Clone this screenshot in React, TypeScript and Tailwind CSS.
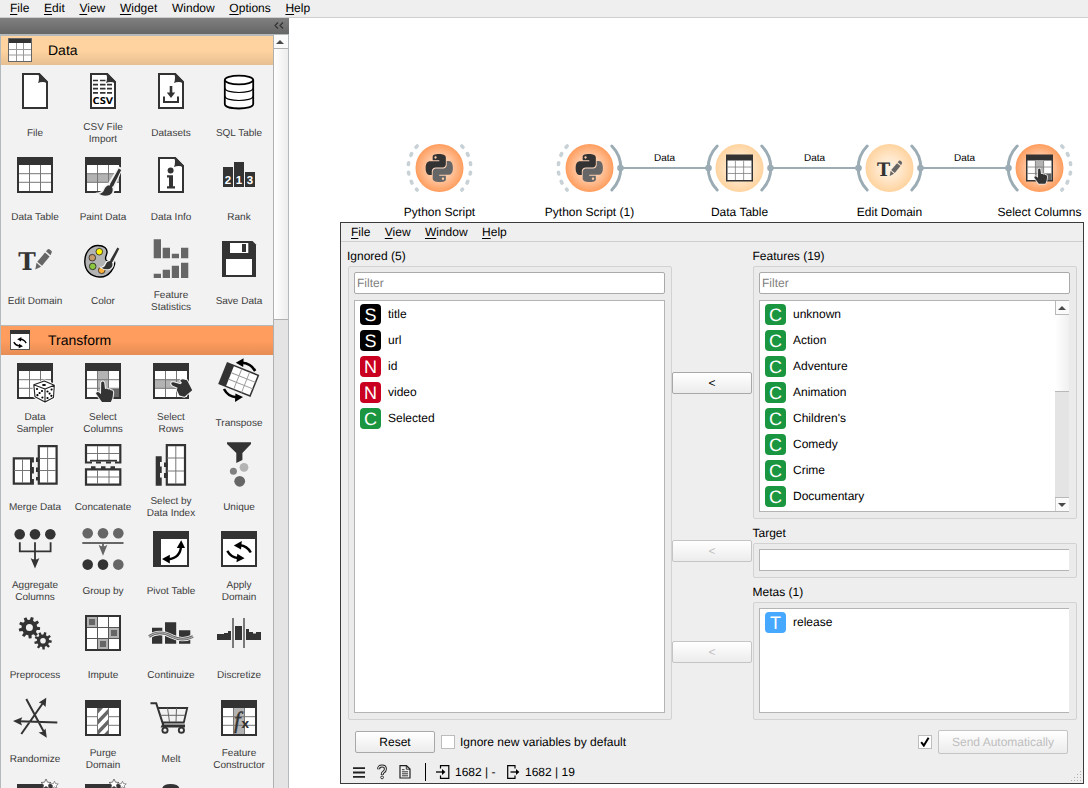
import React from "react";

const D = "#333333";
const G = "#666666";

/* ---------- drawing helpers ---------- */

function Table({ mid, children }: { mid?: React.ReactNode; children?: React.ReactNode }) {
  return (
    <g>
      <rect x="6" y="6" width="36" height="36" fill={D} />
      <rect x="8" y="14" width="32" height="26" fill="#fff" />
      {mid}
      <path d="M18.5 14V40M29.5 14V40M8 22.7H40M8 31.3H40" stroke="#777" strokeWidth="1" fill="none" />
      {children}
    </g>
  );
}

function Doc({ children }: { children?: React.ReactNode }) {
  return (
    <g>
      <path d="M12 7H28L36 15.5V41H12Z" fill="#fff" stroke={D} strokeWidth="2" />
      <path d="M27 6H28.5L37 14.5V16.5Q32 14 27 16Q29 11 27 6Z" fill={D} />
      {children}
    </g>
  );
}

function Brush({ x = 0, y = 0 }: { x?: number; y?: number }) {
  return (
    <g transform={`translate(${x} ${y})`}>
      <path d="M42 18L40 17L29.5 34Q26 35 25 38.5Q24 42 20 42.5Q25 46 30.5 44Q35 42 34 37.5Z" fill={D} stroke="#f2f2f2" strokeWidth="2.6" />
      <path d="M42.2 19L39.8 17.4L31 33.2L34 35.4Z" fill={D} />
      <path d="M30 34.3Q26.5 35 25.3 38.5Q24 42.5 20 42.8Q25 46 30.5 44Q34.5 42 33.6 37.3Z" fill={D} />
    </g>
  );
}

const handUp =
  "M22.2 25.5Q23.7 23.5 25.2 25.5L26 32Q28.2 31 29 32.6Q31 31.8 31.8 33.4Q34 33 34.2 35.5L33.5 41L31.8 45H23L17 36.5Q18.3 34 20.5 35.8L22 37.2Z";

function HandUp() {
  return <path d={handUp} fill={D} stroke="#f2f2f2" strokeWidth="2" paintOrder="stroke" strokeLinejoin="round" />;
}

function Pencil() {
  return (
    <g fill={G}>
      <path d="M24.3 34.5L25.5 27.8L30 31.8Z" />
      <path d="M26.3 26.8L34 17.6L38.6 21.4L31 30.8Z" />
      <path d="M35 16.3L36.6 14.4Q37.6 13.4 38.8 14.4L40.5 16Q41.3 17 40.5 18L39.4 20.2Z" />
    </g>
  );
}

function EditIcon() {
  return (
    <g>
      <text x="7.3" y="35" fontFamily="DejaVu Serif, serif" fontWeight="700" fontSize="24.5" textLength="17.5" lengthAdjust="spacingAndGlyphs" fill={D}>T</text>
      <Pencil />
    </g>
  );
}

function ColumnsIcon() {
  return (
    <Table mid={<><rect x="18" y="14" width="12" height="26" fill="#b3b3b3" /><rect x="30" y="32" width="10" height="8" fill={G} /></>}>
      <HandUp />
    </Table>
  );
}

function gear(cx: number, cy: number, ro: number, ri: number, teeth: number) {
  const pts: string[] = [];
  for (let i = 0; i < teeth; i++) {
    const a = (i * 2 * Math.PI) / teeth + 0.1;
    const s = Math.PI / teeth;
    [[-0.62, ri], [-0.38, ro], [0.38, ro], [0.62, ri]].forEach(([k, r]) => {
      pts.push(`${(cx + r * Math.cos(a + k * s)).toFixed(2)} ${(cy + r * Math.sin(a + k * s)).toFixed(2)}`);
    });
  }
  return `M${pts.join("L")}Z`;
}

function ring(cx: number, cy: number, r: number) {
  return `M${cx - r} ${cy}a${r} ${r} 0 1 0 ${2 * r} 0a${r} ${r} 0 1 0 ${-2 * r} 0Z`;
}

function SwapArrows() {
  return (
    <g>
      <path d="M35.8 27.5Q32 20.8 25 20.3" fill="none" stroke="#000" strokeWidth="2.4" />
      <path d="M18.8 20.4L26.8 16L26 24.6Z" />
      <path d="M12.3 25.8Q16 32.3 23 33" fill="none" stroke="#000" strokeWidth="2.4" />
      <path d="M29.6 33.3L21.5 37.2L22.3 28.8Z" />
    </g>
  );
}

function ApplyIcon() {
  return (
    <g>
      <rect x="6" y="6" width="36" height="36" fill={D} />
      <rect x="8" y="14" width="32" height="26" fill="#fff" />
      <SwapArrows />
    </g>
  );
}

function Star({ x, y, s }: { x: number; y: number; s: number }) {
  return (
    <path
      transform={`translate(${x} ${y}) scale(${s})`}
      d="M0 -5L1.5 -1.8L5 -1.5L2.4 0.9L3.2 4.4L0 2.5L-3.2 4.4L-2.4 0.9L-5 -1.5L-1.5 -1.8Z"
      fill="#fff"
      stroke="#555"
      strokeWidth="0.8"
    />
  );
}

function StarTable() {
  return (
    <g transform="translate(0 1)">
      <Table />
      <Star x={35} y={6} s={1} />
      <Star x={43.5} y={7} s={0.75} />
    </g>
  );
}

/* ---------- widget icons ---------- */

const icons: Record<string, React.ReactNode> = {
  file: <Doc />,
  csv: (
    <Doc>
      {[13.5, 17.6, 21.7, 25.8].map((y) => (
        <path key={y} d={`M14 ${y}H19M21 ${y}H26.5M28 ${y}H33`} stroke={D} strokeWidth="1.7" />
      ))}
      <text x="13.6" y="37.2" fontFamily="Open Sans, sans-serif" fontWeight="700" fontSize="9.6" textLength="20.5" lengthAdjust="spacingAndGlyphs" fill="#000">CSV</text>
    </Doc>
  ),
  datasets: (
    <Doc>
      <path d="M22.7 19H25.3V25.5H28.2L24 31L19.8 25.5H22.7Z" fill={D} />
      <path d="M17 29.5V35H31V29.5" fill="none" stroke={D} strokeWidth="2" />
    </Doc>
  ),
  sql: (
    <g fill="#fff" stroke="#000" strokeWidth="1.8">
      <path d="M9.8 13V37C9.8 43 38.2 43 38.2 37V13" />
      <path d="M9.8 21C9.8 27 38.2 27 38.2 21M9.8 29C9.8 35 38.2 35 38.2 29" fill="none" strokeWidth="1.1" />
      <ellipse cx="24" cy="13" rx="14.2" ry="4.3" />
    </g>
  ),
  table: <Table />,
  paint: (
    <Table mid={<rect x="8" y="23" width="32" height="8.5" fill="#b3b3b3" />}>
      <Brush />
    </Table>
  ),
  info: (
    <Doc>
      <circle cx="23.6" cy="19.4" r="3" fill={D} />
      <path d="M20 24.3H26V35.2H28V37.5H20V35.2H22V26.6H20Z" fill={D} />
    </Doc>
  ),
  rank: (
    <g>
      <path d="M8 16H18V36H8ZM19 11H29V36H19ZM30 21H40V36H30Z" fill={D} />
      <g fill="#fff" fontFamily="Liberation Sans, sans-serif" fontWeight="700" fontSize="11.5" textAnchor="middle">
        <text x="13" y="33.3">2</text>
        <text x="24" y="33.3">1</text>
        <text x="35" y="33.3">3</text>
      </g>
    </g>
  ),
  edit: <EditIcon />,
  color: (
    <g>
      <path
        d="M5.8 27C5.5 18 11 10.5 19 10.5C25 10.5 28.5 13.5 28 17.5C27.6 21 25.5 22 27 25C28.5 27.5 31 25.5 34 25.5C37 26 35.6 32 32 36.5C28.5 41 24.5 42.2 20.5 42C11.5 41.5 6 35.5 5.8 27Z"
        fill="#b3b3b3"
        stroke="#000"
        strokeWidth="1.4"
      />
      <g stroke="#222" strokeWidth="0.8">
        <circle cx="20.3" cy="16.7" r="3.3" fill="#fff200" />
        <circle cx="13.3" cy="22.7" r="3.3" fill="#c69c6d" />
        <circle cx="13.7" cy="31.4" r="3.3" fill="#8cc63f" />
        <circle cx="22.7" cy="35.3" r="3.3" fill="#fbb03b" />
      </g>
      <g transform="translate(6.5 -1.5) scale(0.8)">
        <Brush />
      </g>
    </g>
  ),
  stats: (
    <path
      fill={G}
      d="M6.7 4.3H14V23.3H6.7ZM15.7 12.7H23V23.3H15.7ZM24.8 18.7H32V23.3H24.8ZM34 12.7H41.3V23.3H34ZM6.7 38.7H14V43H6.7ZM15.7 34.7H23V43H15.7ZM24.8 30.7H32V43H24.8ZM34 27.7H41.3V43H34Z"
    />
  ),
  save: (
    <g>
      <path d="M7 6H37.5L41 9.5V42H7Z" fill={D} />
      <rect x="15" y="8" width="18.3" height="10" fill="#fff" />
      <rect x="27" y="9" width="4" height="8" fill={D} />
      <rect x="11" y="24" width="26" height="16" fill="#fff" />
    </g>
  ),
  sampler: (
    <Table>
      <path d="M33.3 24L43.3 28.3L42.5 40.5L34 45L24 39.7L22.8 27.8Z" fill="#fff" stroke="#fff" strokeWidth="3" />
      <path d="M33.3 24L43.3 28.3L42.5 40.5L34 45L24 39.7L22.8 27.8ZM22.8 27.8L34 32L43.3 28.3M34 32V45" fill="#fff" stroke="#222" strokeWidth="1.1" strokeLinejoin="round" />
      <g fill="#000">
        <ellipse cx="33" cy="28" rx="2" ry="1.1" />
        <circle cx="26" cy="32" r="1.1" />
        <circle cx="31" cy="34" r="1.1" />
        <circle cx="28.6" cy="36" r="1.1" />
        <circle cx="26.4" cy="38.2" r="1.1" />
        <circle cx="31.4" cy="40.5" r="1.1" />
        <circle cx="36.5" cy="34.5" r="1.1" />
        <circle cx="40.6" cy="32.5" r="1.1" />
        <circle cx="38.6" cy="36.6" r="1.1" />
        <circle cx="36.5" cy="41" r="1.1" />
        <circle cx="40.4" cy="38.8" r="1.1" />
      </g>
    </Table>
  ),
  columns: <ColumnsIcon />,
  rows: (
    <Table mid={<rect x="8" y="22.5" width="32" height="9" fill="#b3b3b3" />}>
      <path
        d="M24.2 26.8Q24 24.8 26.5 25.3L33.5 27.2L35 25.8L33.2 23.8Q34 21.8 37 22.4L40 23.2L42.5 28L45.2 33.2L37.5 39.8L32.5 38.6L31 35.5L29.8 33L30.5 30.8L25.4 28.4Z"
        fill={D}
        stroke="#f2f2f2"
        strokeWidth="2"
        paintOrder="stroke"
        strokeLinejoin="round"
      />
    </Table>
  ),
  transpose: (
    <g>
      <g transform="translate(12 5) rotate(21.8)">
        <rect x="0" y="0" width="34.8" height="23.8" fill={D} />
        <rect x="8" y="1.5" width="25.3" height="20.8" fill="#fff" />
        <path d="M16.3 1V23M24.8 1V23M8 8.4H34M8 15.4H34" stroke="#999" strokeWidth="0.9" />
      </g>
      <path d="M40.2 14Q36 6.5 27.5 5.8" fill="none" stroke="#000" strokeWidth="2.6" />
      <path d="M20.8 5.8L28.6 1.2L28.2 10Z" />
      <path d="M9 32Q13 39.6 21 40.2" fill="none" stroke="#000" strokeWidth="2.6" />
      <path d="M28 40L20 45L20.4 36.4Z" />
    </g>
  ),
  merge: (
    <g>
      <path d="M2.8 17.4H21.8V42.6H2.8Z" fill="#fff" stroke={D} strokeWidth="2.2" />
      <path d="M11.5 18V42M3 29.5H20" stroke="#777" fill="none" />
      <path d="M19.5 21.5H24V26H19.5ZM19.5 32.5H24V38H19.5Z" fill="#f2f2f2" />
      <path d="M20 18V42" stroke={D} strokeWidth="2" fill="none" />
      <path d="M27.8 5.1H45.6V42.6H27.8Z" fill="#fff" stroke={D} strokeWidth="2.2" />
      <path d="M36.6 6V42M28 17.5H45M28 29.5H45" stroke="#777" fill="none" />
      <path d="M25 16.5H28.5V21H25ZM25 26.5H28.5V31H25ZM25 36H28.5V39.5H25Z" fill={D} />
    </g>
  ),
  concat: (
    <g>
      <path d="M7 4.1H41.3V21.5H7Z" fill="#fff" stroke={D} strokeWidth="2.2" />
      <path d="M18.5 5V20M30 5V20M8 12.5H40" stroke="#777" fill="none" />
      <path d="M13 19.5H17V24H13ZM22 19.5H27V24H22ZM32 19.5H36V24H32Z" fill="#f2f2f2" />
      <path d="M11 19.7H38" stroke={D} strokeWidth="1.8" />
      <path d="M7 28.3H41.3V43.6H7Z" fill="#fff" stroke={D} strokeWidth="2.2" />
      <path d="M18.5 29V43M30 29V43M8 36H40" stroke="#777" fill="none" />
      <path d="M12 25.3H16.5V29H12ZM22 25.3H26.5V29H22ZM31.5 25.3H36V29H31.5Z" fill={D} />
    </g>
  ),
  index: (
    <g>
      <path d="M8.7 15.3H14.7V21H13V25.5H14.7V32H13V36.5H14.7V44.8H8.7Z" fill={D} />
      <path d="M19.8 4.1H38V43.6H19.8Z" fill="#fff" stroke={D} strokeWidth="2.2" />
      <path d="M28.8 5V43M20 17H37M20 30H37" stroke="#777" fill="none" />
      <path d="M17 21.5H20.5V26H17ZM17 32H20.5V37H17Z" fill={D} />
    </g>
  ),
  unique: (
    <g>
      <path d="M12 1.3H36V3L27.4 12V19L21.3 22V12L12 3Z" fill={D} />
      <circle cx="29" cy="26.3" r="4.4" fill="#b3b3b3" />
      <circle cx="18.4" cy="30.3" r="3.5" fill="#808080" />
      <circle cx="24.7" cy="40.3" r="5.4" fill={G} />
    </g>
  ),
  aggregate: (
    <g fill={D}>
      <circle cx="8.7" cy="9.3" r="5.3" />
      <circle cx="24" cy="9.3" r="5.3" />
      <circle cx="39.3" cy="9.3" r="5.3" />
      <path d="M8.8 17.3V26.3H39.6V17.3M24 17.3V37" fill="none" stroke={D} strokeWidth="1.8" />
      <path d="M19.6 33Q24 36 28.4 33L24 43.6Z" />
    </g>
  ),
  group: (
    <g fill={G}>
      <circle cx="8.7" cy="8.3" r="5.3" />
      <circle cx="24" cy="8.3" r="5.3" />
      <circle cx="39.3" cy="8.3" r="5.3" />
      <path d="M3.3 18H44.5M24 18V24" stroke={G} strokeWidth="1.8" />
      <path d="M19.6 19.8Q24 23 28.4 19.8L24 30.8Z" />
      <circle cx="8.7" cy="39.6" r="5.3" fill={D} />
      <circle cx="24" cy="39.6" r="5.3" fill={D} />
      <circle cx="39.3" cy="39.6" r="5.3" />
    </g>
  ),
  pivot: (
    <g>
      <rect x="6" y="6" width="36" height="36" fill={D} />
      <rect x="14" y="14" width="26" height="26" fill="#fff" />
      <path d="M34 21Q33.5 33 21 34.3" fill="none" stroke="#000" strokeWidth="2.4" />
      <path d="M34.2 15.2L38 23H29.8ZM15 34L22.8 29.8V38.4Z" />
    </g>
  ),
  apply: <ApplyIcon />,
  preprocess: (
    <g fill={D} fillRule="evenodd">
      <path d={gear(18.4, 18.6, 10.8, 7.8, 9) + ring(18.4, 18.6, 3.5)} />
      <path d={gear(32, 31.8, 8.8, 6.2, 9) + ring(32, 31.8, 2.8)} />
    </g>
  ),
  impute: (
    <g>
      <rect x="7" y="7" width="34" height="34" fill="#fff" stroke={D} strokeWidth="2" />
      <path d="M8 8H18.5V18.5H8ZM29.5 18.5H40V29.5H29.5ZM18.5 29.5H29.5V40H18.5Z" fill="#b3b3b3" />
      <path d="M10 10H16V16H10ZM32 21H38V27H32ZM21 32H27V38H21Z" fill={G} />
      <path d="M18.5 8V40M29.5 8V40M8 18.5H40M8 29.5H40" stroke="#555" />
    </g>
  ),
  continuize: (
    <g>
      <path d="M5 18.7H15.3V34.8H5ZM18 13.3H29.2V34.8H18ZM32 21.3H43.3V34.8H32Z" fill={D} />
      <path d="M2 27.5C10 22 17 23 25 27.5C32 31 39 31 46 27.5" fill="none" stroke="#f2f2f2" strokeWidth="4.4" />
      <path d="M2 27.5C10 22 17 23 25 27.5C32 31 39 31 46 27.5" fill="none" stroke={G} strokeWidth="2.8" />
      <path d="M2 27.5C10 22 17 23 25 27.5C32 31 39 31 46 27.5" fill="none" stroke="#ddd" strokeWidth="0.7" />
    </g>
  ),
  discretize: (
    <g>
      <path d="M2 25H9V24H13V22H16V31H2ZM20 17H27V31H20ZM31 20H34V23H38V24.5H41V23H46V31H31Z" fill={D} />
      <path d="M18 9V39M29 9V39" stroke={G} strokeWidth="1.7" />
    </g>
  ),
  randomize: (
    <g>
      <path d="M10.3 41L33 8.5M15.3 6L33.5 40M46.3 29.4L8 28.2" stroke={D} strokeWidth="2" />
      <path d="M35.3 4.8L34.6 14L31.6 11L27.8 9.6ZM35.8 44.8L27.6 39.6L31.8 38.8L34.5 35.6ZM2 28L11.3 24.2L9.6 28.2L11 32.6Z" fill={D} />
    </g>
  ),
  purge: (
    <g transform="translate(0 1)">
      <rect x="6" y="6" width="36" height="36" fill={D} />
      <rect x="8" y="14" width="32" height="26" fill="#fff" />
      <path d="M8 22.7H18M8 31.3H18M30 22.7H40M30 31.3H40M18.5 14V40M29.5 14V40" stroke="#777" />
      <path d="M19 14H24L19 19.5ZM29 15V20L19 30.5V25.5ZM29 25.5V30.5L20 40H19V36ZM29 36V40H25.2Z" fill={G} />
    </g>
  ),
  melt: (
    <g fill="none" stroke={D}>
      <path d="M3.5 10.2H9.2L16.4 32.4H38" strokeWidth="2" />
      <path d="M11 15H40.2L36.8 29.5H15.8" strokeWidth="1.8" />
      <path d="M20.5 15L22.5 29M29.5 15L29 29M13.5 22.3H38" stroke={G} strokeWidth="1" />
      <path d="M16.5 30L15 33.5H38" strokeWidth="1.8" />
      <circle cx="18" cy="37.2" r="2.6" strokeWidth="1.9" />
      <circle cx="34.4" cy="37.2" r="2.6" strokeWidth="1.9" />
    </g>
  ),
  constructor_: (
    <g transform="translate(0 1)">
      <Table mid={<rect x="18" y="14" width="12" height="26" fill="#b3b3b3" />} />
      <text x="19" y="33.5" fontFamily="Liberation Serif, serif" fontStyle="italic" fontSize="23.5" fill={D} stroke={D} strokeWidth="0.4">f</text>
      <text x="26.6" y="33.8" fontFamily="Open Sans, sans-serif" fontWeight="700" fontSize="13" fill={D}>x</text>
    </g>
  ),
  starTable: <StarTable />,
  blob: (
    <path d="M15 13Q15 7 23.5 7Q32 7 32.5 12V24H15Z" fill={D} />
  ),
};

function Icon({ name, size = "size-12" }: { name: string; size?: string }) {
  return (
    <svg viewBox="0 0 48 48" className={`${size} shrink-0 overflow-visible`}>
      {icons[name]}
    </svg>
  );
}

const dataWidgets: [string, string][] = [
  ["file", "File"], ["csv", "CSV File\nImport"], ["datasets", "Datasets"], ["sql", "SQL Table"],
  ["table", "Data Table"], ["paint", "Paint Data"], ["info", "Data Info"], ["rank", "Rank"],
  ["edit", "Edit Domain"], ["color", "Color"], ["stats", "Feature\nStatistics"], ["save", "Save Data"],
];

const transformWidgets: [string, string][] = [
  ["sampler", "Data\nSampler"], ["columns", "Select\nColumns"], ["rows", "Select\nRows"], ["transpose", "Transpose"],
  ["merge", "Merge Data"], ["concat", "Concatenate"], ["index", "Select by\nData Index"], ["unique", "Unique"],
  ["aggregate", "Aggregate\nColumns"], ["group", "Group by"], ["pivot", "Pivot Table"], ["apply", "Apply\nDomain"],
  ["preprocess", "Preprocess"], ["impute", "Impute"], ["continuize", "Continuize"], ["discretize", "Discretize"],
  ["randomize", "Randomize"], ["purge", "Purge\nDomain"], ["melt", "Melt"], ["constructor_", "Feature\nConstructor"],
  ["starTable", ""], ["starTable", ""], ["blob", ""],
];

function WidgetGrid({ items }: { items: [string, string][] }) {
  return (
    <div className="grid grid-cols-[repeat(4,68px)] auto-rows-[84px] pt-[2px]">
      {items.map(([icon, label], i) => (
        <div key={i} className="flex flex-col items-center">
          <Icon name={icon} />
          <div className="flex h-9 items-center whitespace-pre pt-[2px] text-center text-[10px] leading-[12px] text-[#3c3c3c]">{label}</div>
        </div>
      ))}
    </div>
  );
}

function Menu({ items, className }: { items: string[]; className: string }) {
  return (
    <div className={`flex shrink-0 items-center border-b border-[#cfcfcf] bg-[#efefef] text-xs leading-[14px] text-black ${className}`}>
      {items.map((m) => (
        <span key={m}>
          {m.startsWith("_") ? (
            <>
              <span className="underline underline-offset-2">{m[1]}</span>
              {m.slice(2)}
            </>
          ) : (
            m
          )}
        </span>
      ))}
    </div>
  );
}

function Arrow({ down }: { down?: boolean }) {
  return (
    <svg viewBox="0 0 8 4" className="h-1 w-2">
      <path d={down ? "M0 0H8L4 4Z" : "M0 4H8L4 0Z"} fill="#4a4a4a" />
    </svg>
  );
}

function Sidebar() {
  return (
    <div className="flex w-[289px] shrink-0 flex-col">
      <div className="flex h-4 shrink-0 items-start justify-end bg-linear-to-b from-[#808080] to-[#666] pr-[5px] pt-1">
        <svg viewBox="0 0 10 7" className="h-[7px] w-[10px]">
          <path d="M4 0.5L1 3.5L4 6.5M9 0.5L6 3.5L9 6.5" fill="none" stroke="#333" strokeWidth="1.2" />
        </svg>
      </div>
      <div className="flex min-h-0 grow border-x border-t border-[#b4b9bb] bg-[#f2f2f2]">
        <div className="w-[272px] shrink-0 overflow-hidden">
          <div className="flex h-[30px] items-center border-t border-[#b4b9bb] bg-linear-to-b from-[#ffd39f] from-50% to-[#e6bf92] pb-px pl-[7px] text-sm text-black">
            <svg viewBox="0 0 24 24" className="size-6">
              <rect width="24" height="24" fill={D} />
              <rect x="1" y="5" width="22" height="18" fill="#fff" />
              <path d="M8.5 5V23M15.5 5V23M1 11.5H23M1 17H23" stroke="#999" />
              <rect x="0.5" y="0.5" width="23" height="23" fill="none" stroke="#666" />
            </svg>
            <span className="pl-4">Data</span>
          </div>
          <WidgetGrid items={dataWidgets} />
          <div className="mt-[6px] flex h-[30px] items-center border-t border-[#b4b9bb] bg-linear-to-b from-[#ff9d5e] from-50% to-[#e68d55] pb-px pl-[9px] text-sm text-black">
            <svg viewBox="0 0 40 40" className="size-5">
              <rect x="1" y="1" width="38" height="38" fill="#fff" stroke="#555" strokeWidth="2" />
              <rect width="40" height="8" fill={D} />
              <g transform="translate(-5.5 -3) scale(1.06)"><SwapArrows /></g>
            </svg>
            <span className="pl-[18px]">Transform</span>
          </div>
          <WidgetGrid items={transformWidgets} />
        </div>
        <div className="flex w-[15px] shrink-0 flex-col border-l border-[#b0b0b0] bg-[#e4e4e4]">
          <div className="flex h-[14px] shrink-0 items-center justify-center border-b border-[#b0b0b0] bg-[#fafafa] pr-0.5">
            <Arrow />
          </div>
          <div className="h-[271px] shrink-0 border-b border-[#b0b0b0] bg-linear-to-r from-white to-[#ededed]" />
        </div>
      </div>
    </div>
  );
}

/* ---------- workflow canvas ---------- */

const snake =
  "M14.25.18l.9.2.73.26.59.3.45.32.34.34.25.34.16.33.1.3.04.26.02.2-.01.13V8.5l-.05.63-.13.55-.21.46-.26.38-.3.31-.33.25-.35.19-.35.14-.33.1-.3.07-.26.04-.21.02H8.77l-.69.05-.59.14-.5.22-.41.27-.33.32-.27.35-.2.36-.15.37-.1.35-.07.32-.04.27-.02.21v3.06H3.17l-.21-.03-.28-.07-.32-.12-.35-.18-.36-.26-.36-.36-.35-.46-.32-.59-.28-.73-.21-.88-.14-1.05-.05-1.23.06-1.22.16-1.04.24-.87.32-.71.36-.57.4-.44.42-.33.42-.24.4-.16.36-.1.32-.05.24-.01h.16l.06.01h8.16v-.83H6.18l-.01-2.75-.02-.37.05-.34.11-.31.17-.28.25-.26.31-.23.38-.2.44-.18.51-.15.58-.12.64-.1.71-.06.77-.04.84-.02 1.27.05zm-6.3 1.98l-.23.33-.08.41.08.41.23.34.33.22.41.09.41-.09.33-.22.23-.34.08-.41-.08-.41-.23-.33-.33-.22-.41-.09-.41.09z";

function PythonLogo() {
  return (
    <g transform="translate(-13.8 -14) scale(1.13 1.17)">
      <path d={snake} fill={D} />
      <path d={snake} fill={G} transform="rotate(180 12 12)" />
    </g>
  );
}

type Side = "dash" | "solid" | "none";

function NodeArt({ x, tone, left, right, children }: { x: number; tone: string; left: Side; right: Side; children: React.ReactNode }) {
  const arc = (side: Side, d: string) =>
    side === "none" ? null : side === "solid" ? (
      <path d={d} fill="none" stroke="#9cacb4" strokeWidth="3" strokeLinecap="round" />
    ) : (
      <path d={d} fill="none" stroke="#c8d2d6" strokeWidth="3.6" strokeLinecap="round" strokeDasharray="1.8 7.7" />
    );
  return (
    <g transform={`translate(${x + 0.5} 150)`}>
      {arc(left, "M-22.3 -22A31.4 31.4 0 0 0 -22.3 22")}
      {arc(right, "M22.3 -22A31.4 31.4 0 0 1 22.3 22")}
      <circle r="24" fill={`url(#${tone})`} />
      {children}
    </g>
  );
}

function Link({ x1, x2 }: { x1: number; x2: number }) {
  return (
    <g fill="#9cacb4">
      <path d={`M${x1} 150H${x2}`} stroke="#9cacb4" strokeWidth="2" />
      <circle cx={x1} cy="150" r="3.3" />
      <circle cx={x2} cy="150" r="3.3" />
    </g>
  );
}

const nodes: [number, string][] = [[150, "Python Script"], [300, "Python Script (1)"], [450, "Data Table"], [600, "Edit Domain"], [750, "Select Columns"]];

function Canvas() {
  return (
    <div className="relative min-w-0 grow overflow-hidden bg-white">
      <svg className="absolute left-0 top-0 h-[210px] w-[799px]" viewBox="0 0 799 210">
        <defs>
          <radialGradient id="orange">
            <stop offset="0" stopColor="#ffe6d6" />
            <stop offset="0.5" stopColor="#ffc8a3" />
            <stop offset="1" stopColor="#ff9d5e" />
          </radialGradient>
          <radialGradient id="sand">
            <stop offset="0" stopColor="#fff4e6" />
            <stop offset="0.5" stopColor="#ffe6c8" />
            <stop offset="1" stopColor="#ffd39f" />
          </radialGradient>
        </defs>
        <Link x1={331.5} x2={419.5} />
        <Link x1={481.5} x2={569.5} />
        <Link x1={631.5} x2={719.5} />
        <NodeArt x={150} tone="orange" left="dash" right="dash"><PythonLogo /></NodeArt>
        <NodeArt x={300} tone="orange" left="dash" right="solid"><PythonLogo /></NodeArt>
        <NodeArt x={450} tone="sand" left="solid" right="solid">
          <g transform="translate(-18 -18) scale(0.75)"><Table /></g>
        </NodeArt>
        <NodeArt x={600} tone="sand" left="solid" right="solid">
          <g transform="translate(-18 -18) scale(0.75)"><EditIcon /></g>
        </NodeArt>
        <NodeArt x={750} tone="orange" left="solid" right="dash">
          <g transform="translate(-18 -18) scale(0.75)"><ColumnsIcon /></g>
        </NodeArt>
      </svg>
      {nodes.map(([x, label]) => (
        <div key={label} className="absolute top-[187px] w-[120px] -translate-x-1/2 whitespace-nowrap text-center text-xs leading-[14px] text-black" style={{ left: x + 0.5 }}>
          {label}
        </div>
      ))}
      {[375, 525, 675].map((x) => (
        <div key={x} className="absolute top-[135px] w-10 -translate-x-1/2 text-center text-[10px] leading-3 text-black" style={{ left: x + 0.5 }}>
          Data
        </div>
      ))}
      <Dialog />
    </div>
  );
}

/* ---------- Select Columns window ---------- */

const typeColor: Record<string, string> = { S: "bg-black", N: "bg-[#ca0020]", C: "bg-[#1a9641]", T: "bg-[#46a9ff]" };

function Variables({ items }: { items: [string, string][] }) {
  return (
    <div className="min-w-0 grow">
      {items.map(([t, name]) => (
        <div key={name} className="flex h-[26px] items-center pl-[5px] text-xs text-black">
          <span className={`flex size-[21px] items-center justify-center rounded-[4px] pt-px text-[18px] leading-none text-white ${typeColor[t]}`}>{t}</span>
          <span className="pl-[7px]">{name}</span>
        </div>
      ))}
    </div>
  );
}

function Group({ className, children }: { className: string; children: React.ReactNode }) {
  return <div className={`flex shrink-0 flex-col rounded-[2px] border border-[#d2d2d2] bg-[#ebebeb] p-[5px] ${className}`}>{children}</div>;
}

function Filter() {
  return (
    <div className="mb-[6px] flex h-[22px] w-[311px] shrink-0 items-center rounded-[2px] border border-[#aaa] bg-white pl-[2px] text-xs text-[#808080]">Filter</div>
  );
}

function MoveButton({ off, className }: { off?: boolean; className: string }) {
  return (
    <div className={`flex h-[22px] w-20 shrink-0 items-center justify-center rounded-[2px] border bg-linear-to-b from-white to-[#ececec] text-xs ${off ? "border-[#c4c4c4] text-[#bebebe]" : "border-[#a8a8a8] text-black"} ${className}`}>
      &lt;
    </div>
  );
}

const genres = ["unknown", "Action", "Adventure", "Animation", "Children's", "Comedy", "Crime", "Documentary"];

function Dialog() {
  return (
    <div className="absolute left-[51px] top-[204px] flex h-[562px] w-[744px] flex-col border border-[#3c3c3c] bg-[#eeeeee]">
      <Menu items={["_File", "_View", "_Window", "_Help"]} className="h-[19px] gap-[14.4px] pl-[10px]" />
      <div className="flex h-[478px] shrink-0 pl-[6px] text-xs text-black">
        <div className="flex w-[325px] shrink-0 flex-col">
          <div className="h-6 pt-[7px] leading-[14px]">Ignored (5)</div>
          <Group className="ml-px h-[454px] w-[324px]">
            <Filter />
            <div className="mb-px flex w-[311px] grow border border-[#b4b4b4] bg-white">
              <Variables items={[["S", "title"], ["S", "url"], ["N", "id"], ["N", "video"], ["C", "Selected"]]} />
            </div>
          </Group>
        </div>
        <div className="flex w-20 shrink-0 flex-col">
          <MoveButton className="mt-[130px]" />
          <MoveButton off className="mt-[146px]" />
          <MoveButton off className="mt-[79px]" />
        </div>
        <div className="flex w-[325px] shrink-0 flex-col">
          <div className="h-6 pl-[0.5px] pt-[7px] leading-[14px]">Features (19)</div>
          <Group className="ml-px h-[253px] w-[324px]">
            <Filter />
            <div className="flex h-[212px] w-[310px] border-y border-l border-[#b4b4b4] bg-white">
              <Variables items={genres.map((g) => ["C", g] as [string, string])} />
              <div className="flex w-[14px] shrink-0 flex-col">
                <div className="flex h-[14px] shrink-0 items-center justify-center border-b border-l border-[#b8b8b8] bg-[#fafafa] pr-0.5"><Arrow /></div>
                <div className="h-[76px] shrink-0 bg-linear-to-r from-white to-[#f0f0f0]" />
                <div className="h-[107px] shrink-0 border-y border-[#b8b8b8] bg-[#e4e4e4]" />
                <div className="flex grow items-center justify-center border-l border-[#d0d0d0] bg-[#fafafa] pr-0.5"><Arrow down /></div>
              </div>
            </div>
          </Group>
          <div className="h-6 pl-[0.5px] pt-[7px] leading-[14px]">Target</div>
          <Group className="ml-px h-[35px] w-[324px]">
            <div className="h-[22px] w-[310px] shrink-0 border-y border-l border-[#b4b4b4] bg-white" />
          </Group>
          <div className="h-6 pl-[0.5px] pt-[7px] leading-[14px]">Metas (1)</div>
          <Group className="ml-px h-[118px] w-[324px]">
            <div className="mb-px flex w-[310px] grow border-y border-l border-[#b4b4b4] bg-white">
              <Variables items={[["T", "release"]]} />
            </div>
          </Group>
        </div>
      </div>
      <div className="flex h-[44px] shrink-0 items-center pl-[14px] pr-[15px] text-xs text-black">
        <div className="flex h-[22px] w-20 items-center justify-center rounded-[2px] border border-[#a8a8a8] bg-linear-to-b from-white to-[#ececec]">Reset</div>
        <div className="ml-[6px] size-[14px] border border-[#bdbdbd] bg-white" />
        <div className="pl-[5px]">Ignore new variables by default</div>
        <div className="ml-auto flex size-[14px] items-center justify-center border border-[#bdbdbd] bg-white">
          <svg viewBox="0 0 10 10" className="size-[10px]">
            <path d="M1.2 5.2L3.8 8.6L8.6 0.8" fill="none" stroke="#000" strokeWidth="2" />
          </svg>
        </div>
        <div className="ml-[6px] flex h-6 w-[130px] items-center justify-center rounded-[2px] border border-[#c4c4c4] bg-linear-to-b from-white to-[#ececec] text-[#bebebe]">Send Automatically</div>
      </div>
      <div className="flex grow items-start pl-3 text-xs leading-[14px] text-black">
        <div className="-mt-[2px] flex h-5 items-center">
          <svg viewBox="0 0 12 11" className="h-[11px] w-3"><path d="M0 1.2H12M0 5.5H12M0 9.8H12" stroke="#222" strokeWidth="1.8" /></svg>
          <svg viewBox="0 0 12 16" className="ml-[11px] h-4 w-3">
            <path d="M2.6 5.2Q2.6 2 6 2Q9.4 2 9.4 4.9Q9.4 7 7.3 8.2Q6.2 8.9 6.2 11" fill="none" stroke="#222" strokeWidth="3" />
            <path d="M2.6 4.7Q2.6 2 6 2Q9.4 2 9.4 4.9Q9.4 7 7.3 8.2Q6.2 8.9 6.2 10.4" fill="none" stroke="#eee" strokeWidth="1.1" />
            <circle cx="6.1" cy="13.4" r="1.4" fill="#eee" stroke="#222" strokeWidth="0.9" />
          </svg>
          <svg viewBox="0 0 12 14" className="ml-[11px] h-[14px] w-3">
            <path d="M1 0.7H7.5L11 4V13H1Z" fill="#eee" stroke="#222" strokeWidth="1.2" />
            <path d="M7.3 0.7V4.2H11M3 4.7H5.5M3 6.8H9M3 8.8H9M3 10.8H9" fill="none" stroke="#222" strokeWidth="0.9" />
          </svg>
          <div className="ml-[14px] h-[18px] w-px bg-black" />
          <svg viewBox="0 0 14 14" className="ml-[10px] size-[14px]">
            <path d="M4.5 3.5V0.7H12.8V13.3H4.5V10.5" fill="none" stroke="#000" strokeWidth="1.2" />
            <path d="M0 7H8" stroke="#000" strokeWidth="1.3" /><path d="M6 4L9.4 7L6 10Z" />
          </svg>
          <span className="pl-[5px]">1682 | -</span>
          <svg viewBox="0 0 14 14" className="ml-[10.5px] size-[14px]">
            <path d="M9 3.5V0.7H1.7V13.3H9V10.5" fill="none" stroke="#000" strokeWidth="1.2" />
            <path d="M4.5 7H12" stroke="#000" strokeWidth="1.3" /><path d="M10 4L13.4 7L10 10Z" />
          </svg>
          <span className="pl-[5px]">1682 | 19</span>
        </div>
        <svg viewBox="0 0 12 12" className="ml-auto mr-px mt-[6px] size-3" fill="#b0b0b0">
          {[[10, 1], [10, 4], [7, 4], [10, 7], [7, 7], [4, 7], [10, 10], [7, 10], [4, 10], [1, 10]].map(([x, y]) => (
            <rect key={`${x}-${y}`} x={x} y={y} width="1" height="1" />
          ))}
        </svg>
      </div>
    </div>
  );
}

export default function App() {
  return (
    <div className="flex h-[788px] w-[1088px] flex-col overflow-hidden bg-white font-['Liberation_Sans',Arial,sans-serif] [text-rendering:geometricPrecision]">
      <Menu items={["_File", "_Edit", "_View", "_Widget", "Window", "_Options", "_Help"]} className="h-[18px] gap-[14.7px] pb-px pl-[10px]" />
      <div className="flex min-h-0 grow">
        <Sidebar />
        <Canvas />
      </div>
    </div>
  );
}
